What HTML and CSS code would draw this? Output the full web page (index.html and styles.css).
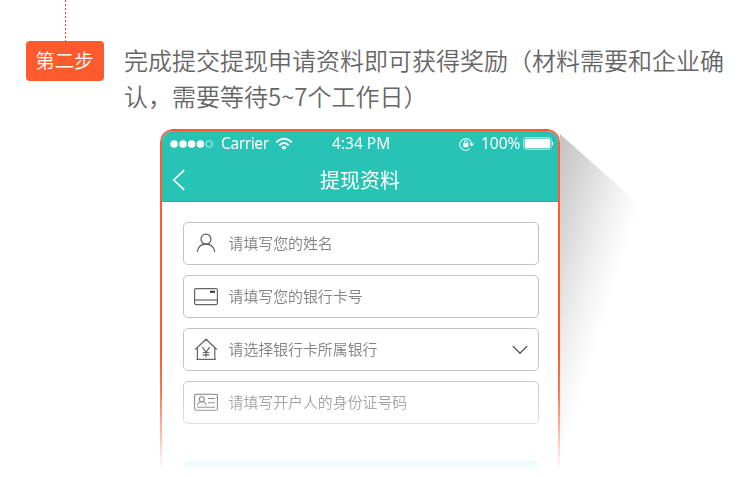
FILE: index.html
```html
<!DOCTYPE html>
<html lang="zh-CN">
<head>
<meta charset="utf-8">
<title>提现资料</title>
<link rel="stylesheet" href="styles.css">
</head>
<body>
<main class="page">
  <section class="step">
    <div class="marker"><span class="line"></span><span class="badge">第二步</span></div>
    <p class="copy">完成提交提现申请资料即可获得奖励（材料需要和企业确认，需要等待5~7个工作日）</p>
  </section>
  <div class="stage">
    <div class="cast"></div>
    <section class="phone">
      <header class="head">
        <div class="status">
          <svg class="dots" width="44" height="10" viewBox="0 0 44 10"><g fill="#fff"><circle cx="4.1" cy="5" r="3.8"/><circle cx="13" cy="5" r="3.8"/><circle cx="21.6" cy="5" r="3.8"/><circle cx="30.4" cy="5" r="3.8"/></g><circle cx="39.2" cy="5" r="3.3" fill="none" stroke="#c3eee9" stroke-width="1"/></svg>
          <span class="carrier">Carrier</span>
          <svg class="wifi" width="18" height="14" viewBox="0 0 18 14"><g fill="none" stroke="#fff" stroke-width="1.9"><path d="M1.2 5.2Q9-1.8 16.8 5.2"/><path d="M4.3 8.2Q9 3.8 13.7 8.2"/></g><path d="M6.3 10.2Q9 8 11.7 10.2L9 12.9Z" fill="#fff"/></svg>
          <span class="time">4:34 PM</span>
          <svg class="lock" width="16" height="14" viewBox="0 0 16 14"><path d="M11.1 11.5A5.9 5.9 0 1 1 12.6 7" fill="none" stroke="#e0f7f5" stroke-width="1.1"/><path d="M10.2 6.4h4.8l-2.4 3z" fill="#fff"/><rect x="4.3" y="6.2" width="5" height="4" fill="#fff"/><path d="M5.3 6.5V5a1.5 1.5 0 0 1 3 0v1.5" fill="none" stroke="#fff"/></svg>
          <span class="power">100%</span>
          <svg class="battery" width="31" height="13" viewBox="0 0 31 13"><rect x=".6" y=".6" width="27.6" height="11.8" rx="2" fill="none" stroke="#a4e5df"/><rect x="1.8" y="1.8" width="25.2" height="9.4" rx="1" fill="#fff"/><path d="M29 4.2q2.6 2.3 0 4.6z" fill="#fff"/></svg>
        </div>
        <div class="nav">
          <svg class="back" width="14" height="22" viewBox="0 0 14 22"><path d="M12.2 1.2L1.8 11l10.4 9.8" fill="none" stroke="#fff" stroke-width="1.6"/></svg>
          <h1>提现资料</h1>
        </div>
      </header>
      <div class="form">
        <div class="field"><svg width="26" height="26" viewBox="0 0 26 26"><g fill="none" stroke="#5c5c5c" stroke-width="1.2"><circle cx="13" cy="8.2" r="5"/><path d="M4.2 21C5 16 8.3 13.2 13 13.2s8 2.8 8.8 7.8"/></g></svg><span>请填写您的姓名</span></div>
        <div class="field"><svg width="26" height="26" viewBox="0 0 26 26"><g fill="none" stroke="#666" stroke-width="1.2"><rect x="1.6" y="4.6" width="22.8" height="16" rx="1.5"/><path d="M1.6 16h22.8"/></g><path d="M17 7.8h5" stroke="#333" stroke-width="2"/></svg><span>请填写您的银行卡号</span></div>
        <div class="field"><svg width="26" height="26" viewBox="0 0 26 26"><g fill="none" stroke="#666" stroke-width="1.2"><path d="M2.2 12.5L13 2.2l10.8 10.3M4.4 10.7v11.6M21.8 10.7v11.6M3.4 22.3h19.5M9.4 10.1l3.6 5 3.6-5M13 15v5.2M9.7 15.5h6.6M9.7 17.9h6.6"/></g></svg><span>请选择银行卡所属银行</span><svg class="chevron" width="16" height="10" viewBox="0 0 16 10"><path d="M.8 1L8 8.3 15.2 1" fill="none" stroke="#555" stroke-width="1.3"/></svg></div>
        <div class="field"><svg width="26" height="26" viewBox="0 0 26 26"><g fill="none" stroke="#666" stroke-width="1.1"><rect x="1.6" y="4.3" width="22.8" height="16" rx="1.5"/><circle cx="8.8" cy="9.3" r="2.5"/><path d="M4.4 15.5q.8-3.7 4.4-3.7t4.4 3.7M15 8.5h7M15 12.8h7M4.2 17.3H22"/></g></svg><span>请填写开户人的身份证号码</span></div>
        <div class="submit"></div>
      </div>
    </section>
  </div>
</main>
</body>
</html>
```

FILE: styles.css
```css
* { box-sizing: border-box; }
body { margin: 0; background: #fff; font-family: "Noto Sans CJK SC", sans-serif; font-weight: 350; }
svg { display: block; flex: none; }
.page { width: 750px; height: 477px; overflow: hidden; }
.step { display: flex; height: 129px; padding-left: 26px; }
.marker { width: 78px; display: flex; flex-direction: column; }
.line {
  width: 1px; height: 41px; margin-left: 39px;
  background: repeating-linear-gradient(#f4401c 0 2px, #fff 2px 4px);
}
.badge {
  height: 40px; border-radius: 4px; background: #ff5b2e; color: #fff;
  font-size: 19.5px; line-height: 38px; text-align: center; text-indent: -1px;
}
.copy {
  width: 606px; margin: 42px 0 0 20px; color: #666;
  font-size: 24px; line-height: 36px;
}
.stage { position: relative; width: 400px; height: 343px; margin-left: 160px; }
.cast {
  position: absolute; left: 397px; top: 2px; width: 86px; height: 341px;
  clip-path: polygon(3px 3px, 86px 77px, 86px 100%, 3px 100%);
  background: linear-gradient(107deg, #c0c0c0 0, #d8d8d8 38px, #f0f0f0 72px, #fff 101px);
}
.phone {
  position: relative; width: 400px; height: 343px; overflow: hidden;
  border: 2px solid #ff5b2e; border-bottom: 0; border-radius: 13px 13px 0 0;
  background: #fff;
  -webkit-mask-image: linear-gradient(#000 225px, rgba(0,0,0,.82) 265px, rgba(0,0,0,.5) 296px, rgba(0,0,0,.09) 332px, transparent 343px);
  mask-image: linear-gradient(#000 225px, rgba(0,0,0,.82) 265px, rgba(0,0,0,.5) 296px, rgba(0,0,0,.09) 332px, transparent 343px);
}
.head { height: 71px; background: #27c4b6; border-bottom: 1px solid #16b8a9; color: #fff; }
.status {
  display: flex; align-items: center; height: 25px; padding-left: 8px;
  font-family: "Noto Sans", sans-serif; font-size: 15.5px; line-height: 25px; font-weight: 400;
}
.carrier { width: 48px; margin-left: 7px; letter-spacing: -.4px; }
.wifi { margin-left: 6px; }
.time { width: 60px; margin-left: 39px; white-space: nowrap; }
.lock { margin-left: 67px; }
.power { width: 40px; margin-left: 6px; white-space: nowrap; }
.battery { margin-left: 2px; }
.nav { display: grid; grid-template-columns: 28px 1fr 28px; align-items: center; height: 45px; }
.back { margin: 2px 0 0 10px; }
h1 { margin: 3px 0 0; font-size: 20px; line-height: 30px; font-weight: 400; text-align: center; }
.form { padding: 20px 19px 0 21px; display: flex; flex-direction: column; gap: 10px; }
.field {
  display: flex; align-items: center; height: 43px; flex: none; padding: 0 10px 0 9px;
  border: 1px solid #c3c3c3; border-radius: 5px;
  color: #828282; font-size: 14.9px; line-height: 24px;
}
.field span { margin: -2px 0 0 9.5px; }
.field .chevron { margin-left: auto; }
.submit { height: 50px; flex: none; margin-top: 27px; border-radius: 5px; background: #27c4b6; }
```
